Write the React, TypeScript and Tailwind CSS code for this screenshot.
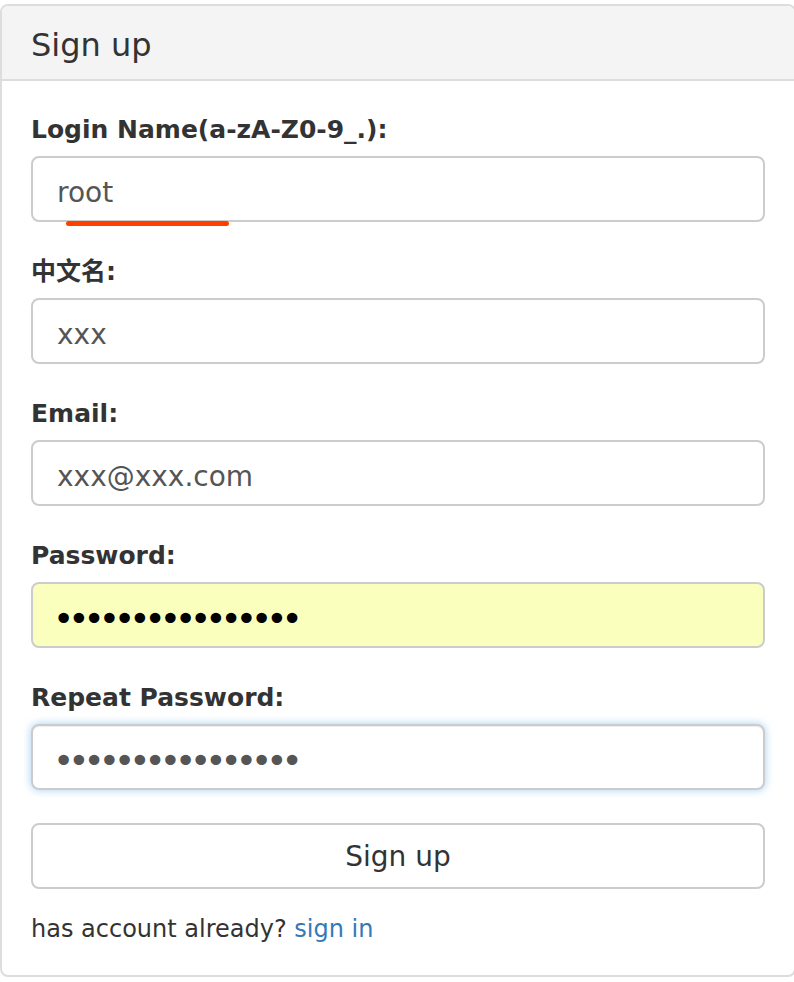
import React from 'react';

const font = { fontFamily: '"DejaVu Sans", "Noto Sans CJK SC", sans-serif' };

const Field = ({
  label,
  children,
}: {
  label: string;
  children: React.ReactNode;
}) => (
  <div className="mb-[30px]">
    <label className="block text-[25px] leading-[40px] font-bold text-[#333] mb-[6px]">{label}</label>
    {children}
  </div>
);

const inputBase =
  'block w-full h-[66px] rounded-[8px] border-2 border-[#ccc] pt-[6px] text-[28px] text-[#555] outline-none';

const App = () => {
  const dots = '\u2022'.repeat(16);

  return (
    <div className="min-h-screen bg-white pt-[4px]" style={font}>
      <div className="w-[796px] rounded-[8px] border-2 border-[#ddd] bg-white">
        {/* Heading */}
        <div className="h-[75px] flex items-center px-[29px] pt-[4px] bg-[#f4f4f4] border-b-2 border-[#ddd] rounded-t-[6px]">
          <h3 className="text-[32px] text-[#333]">Sign up</h3>
        </div>

        {/* Body */}
        <div className="px-[29px] pt-[29px] pb-[28px]">
          <Field label="Login Name(a-zA-Z0-9_.):">
            <div className="relative">
              <input readOnly value="root" className={`${inputBase} px-[24px] bg-white`} />
              <span className="absolute left-[35px] top-[65px] w-[163px] h-[5px] rounded-full bg-[#ff4000]" />
            </div>
          </Field>

          <Field label="中文名:">
            <input readOnly value="xxx" className={`${inputBase} px-[24px] bg-white`} />
          </Field>

          <Field label="Email:">
            <input readOnly value="xxx@xxx.com" className={`${inputBase} px-[24px] bg-white`} />
          </Field>

          <Field label="Password:">
            <input
              readOnly
              value={dots}
              className={`${inputBase} px-[20px] bg-[#faffbd] text-black text-[36px] tracking-[-6px]`}
            />
          </Field>

          <Field label="Repeat Password:">
            <input
              readOnly
              value={dots}
              className={`${inputBase} px-[20px] bg-white border-[#66afe9] text-[36px] tracking-[-6px] shadow-[inset_0_1px_1px_rgba(0,0,0,0.075),0_0_8px_rgba(102,175,233,0.6)]`}
            />
          </Field>

          <button className="block w-full h-[66px] mt-[33px] pt-[2px] rounded-[8px] border-2 border-[#ccc] bg-white text-[28px] text-[#333]">
            Sign up
          </button>

          <p className="mt-[22px] text-[24px] leading-[36px] text-[#333]">
            has account already? <a href="#" className="text-[#337ab7]">sign in</a>
          </p>
        </div>
      </div>
    </div>
  );
};

export default App;
